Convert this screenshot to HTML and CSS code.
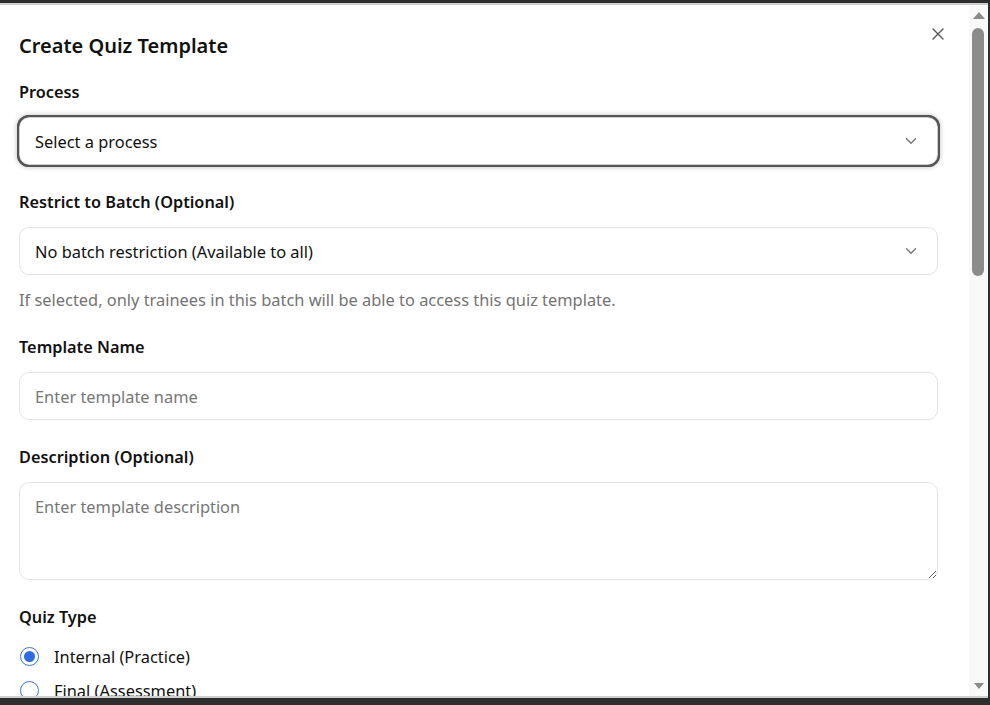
FILE: index.html
```html
<!DOCTYPE html>
<html lang="en">
<head>
<meta charset="utf-8">
<title>Create Quiz Template</title>
<link rel="stylesheet" href="styles.css">
</head>
<body>
<div class="dialog">
  <div class="scroll-area">
    <div class="content">
      <button class="close" aria-label="Close">
        <svg width="12" height="12" viewBox="0 0 12 12"><path d="M1 1L11 11M11 1L1 11" stroke="#555" stroke-width="1.4" fill="none" stroke-linecap="round"/></svg>
      </button>
      <h2 class="title">Create Quiz Template</h2>
      <div class="form">
        <div class="group">
          <label class="label">Process</label>
          <div class="select focused">
            <span>Select a process</span>
            <svg class="chev" width="12" height="8" viewBox="0 0 12 8"><path d="M1.5 1.8L6 6.2L10.5 1.8" stroke="#777" stroke-width="1.4" fill="none" stroke-linecap="round" stroke-linejoin="round"/></svg>
          </div>
        </div>
        <div class="group">
          <label class="label">Restrict to Batch (Optional)</label>
          <div class="select">
            <span>No batch restriction (Available to all)</span>
            <svg class="chev" width="12" height="8" viewBox="0 0 12 8"><path d="M1.5 1.8L6 6.2L10.5 1.8" stroke="#777" stroke-width="1.4" fill="none" stroke-linecap="round" stroke-linejoin="round"/></svg>
          </div>
          <p class="help">If selected, only trainees in this batch will be able to access this quiz template.</p>
        </div>
        <div class="group">
          <label class="label">Template Name</label>
          <input class="input" type="text" placeholder="Enter template name">
        </div>
        <div class="group">
          <label class="label">Description (Optional)</label>
          <textarea class="textarea" placeholder="Enter template description"></textarea>
        </div>
        <div class="group">
          <label class="label">Quiz Type</label>
          <div class="radios">
            <div class="radio-row"><span class="radio checked"></span><span>Internal (Practice)</span></div>
            <div class="radio-row"><span class="radio"></span><span>Final (Assessment)</span></div>
          </div>
        </div>
      </div>
    </div>
  </div>
  <div class="scrollbar" aria-hidden="true">
    <div class="sb-btn">
      <svg width="12" height="7" viewBox="0 0 12 7"><path d="M6 0L12 7H0Z" fill="#8a8a8a"/></svg>
    </div>
    <div class="sb-track"><div class="sb-thumb"></div></div>
    <div class="sb-btn">
      <svg width="10" height="6" viewBox="0 0 10 6"><path d="M0 0H10L5 6Z" fill="#8a8a8a"/></svg>
    </div>
  </div>
</div>
</body>
</html>
```
FILE: styles.css
```css
* { box-sizing: border-box; }
html, body { margin: 0; padding: 0; }
body {
  background: #2e2e2e;
  height: 705px;
  overflow: hidden;
  font-family: "Noto Sans", "Open Sans", sans-serif;
  color: #111;
}
.dialog {
  margin-top: 3px;
  width: 988px;
  height: 695px;
  background: #fff;
  border-top: 2px solid #cfcfcf;
  border-bottom: 2px solid #cfcfcf;
  display: flex;
}
.scroll-area {
  flex: 1;
  min-width: 0;
  overflow: hidden;
}
.content {
  position: relative;
  padding: 27px 31px 40px 19px;
}
.close {
  position: absolute;
  top: 21px;
  right: 23px;
  width: 16px;
  height: 16px;
  padding: 2px;
  border: 0;
  background: none;
  display: flex;
  align-items: center;
  justify-content: center;
}
.title {
  margin: 0 0 20px;
  font-size: 20px;
  line-height: 28px;
  font-weight: 600;
}
.form { display: flex; flex-direction: column; gap: 25px; }
.group { display: flex; flex-direction: column; }
.label {
  font-size: 16.3px;
  line-height: 24px;
  font-weight: 600;
  margin-bottom: 13px;
}
.select, .input {
  height: 48px;
  border: 1px solid #e3e3e3;
  border-radius: 10px;
  display: flex;
  align-items: center;
  justify-content: space-between;
  padding: 0 20px 0 15px;
  font-size: 16.4px;
  font-family: inherit;
  color: #111;
  background: #fff;
}
.select.focused {
  border-color: #d0d0d0;
  outline: 2px solid #555;
  outline-offset: 0;
  box-shadow: 0 0 0 2px #555, 0 0 4px 3px rgba(0,0,0,0.18);
}
.chev { flex: none; }
.input::placeholder, .textarea::placeholder { color: #767676; }
.help {
  margin: 15px 0 0;
  font-size: 16.4px;
  line-height: 20px;
  color: #737373;
}
.textarea {
  height: 98px;
  border: 1px solid #e3e3e3;
  border-radius: 10px;
  padding: 12px 15px;
  font-size: 16.4px;
  font-family: inherit;
  color: #111;
  resize: vertical;
}
.radios { display: flex; flex-direction: column; gap: 10px; margin-top: 2px; }
.radio-row {
  display: flex;
  align-items: center;
  height: 24px;
  font-size: 16.4px;
  gap: 15px;
}
.radio {
  width: 19px;
  height: 19px;
  border: 1.5px solid #3b74e0;
  border-radius: 50%;
  flex: none;
  position: relative;
  margin-left: 1px;
}
.radio.checked::after {
  content: "";
  position: absolute;
  inset: 3px;
  border-radius: 50%;
  background: #2f6ce0;
}
.scrollbar {
  width: 19px;
  flex: none;
  background: #f9f9f9;
  display: flex;
  flex-direction: column;
}
.sb-btn {
  height: 20px;
  display: flex;
  align-items: center;
  justify-content: center;
  flex: none;
}
.sb-track {
  flex: 1;
  padding: 3px 4px 0 3px;
}
.sb-thumb {
  height: 248px;
  background: #8c8c8c;
  border-radius: 6px;
}
```
